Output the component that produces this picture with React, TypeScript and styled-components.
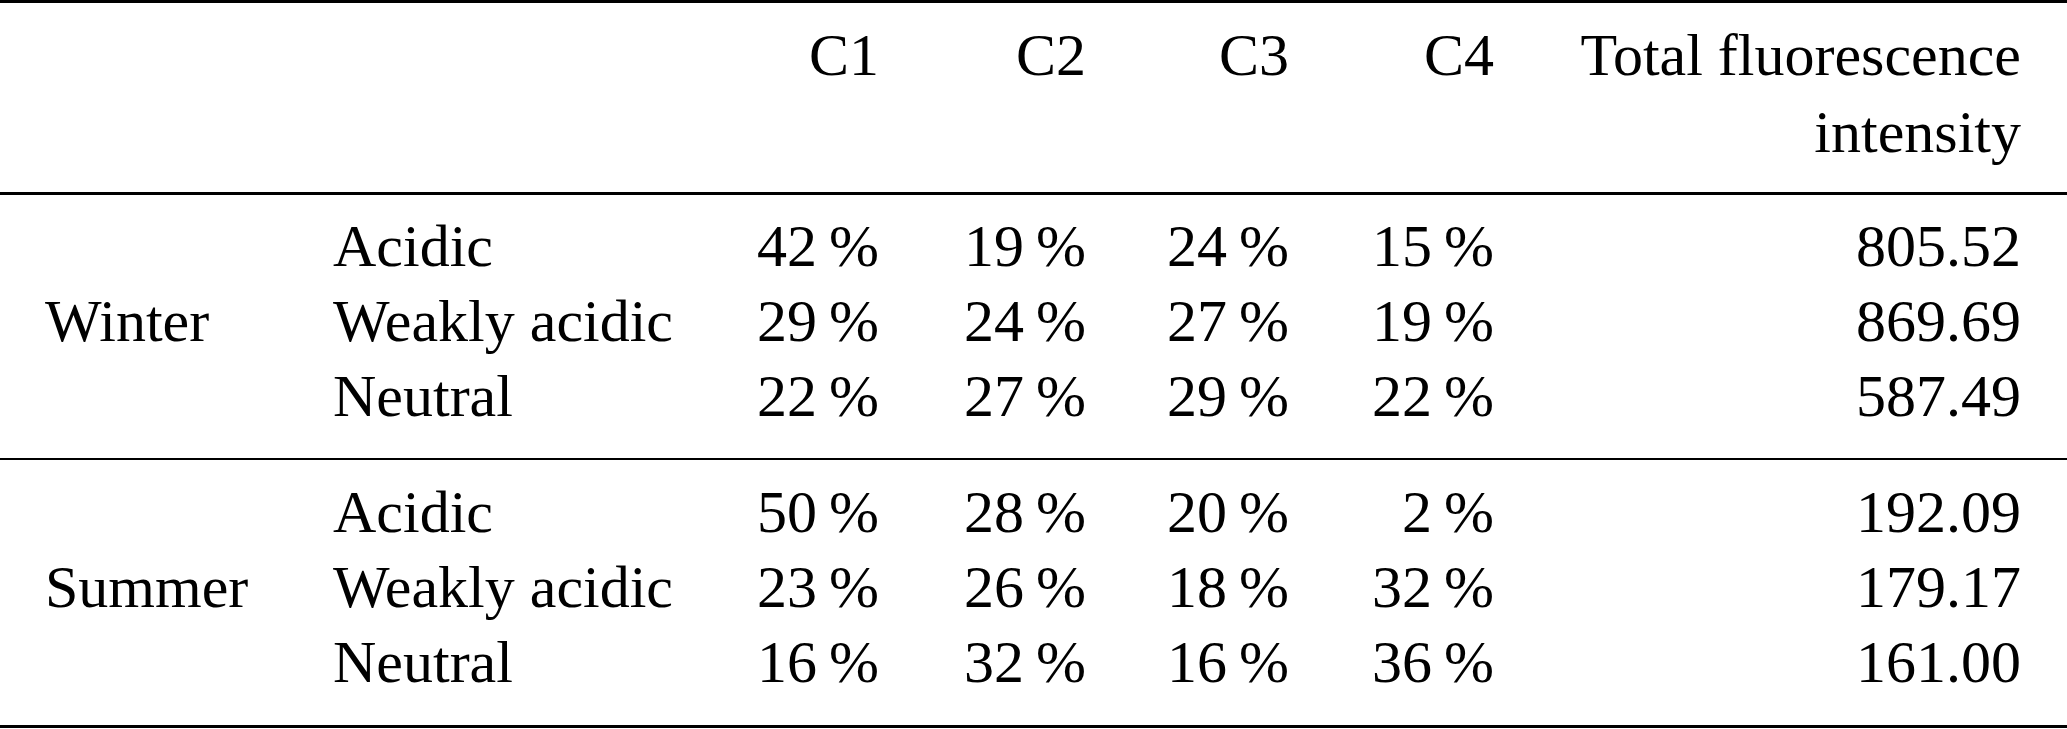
import React from "react";
import styled, { createGlobalStyle } from "styled-components";

type Row = {
  kind: string;
  values: string[];
  total: string;
};

type Group = {
  season: string;
  rows: Row[];
};

const groups: Group[] = [
  {
    season: "Winter",
    rows: [
      { kind: "Acidic", values: ["42", "19", "24", "15"], total: "805.52" },
      { kind: "Weakly acidic", values: ["29", "24", "27", "19"], total: "869.69" },
      { kind: "Neutral", values: ["22", "27", "29", "22"], total: "587.49" },
    ],
  },
  {
    season: "Summer",
    rows: [
      { kind: "Acidic", values: ["50", "28", "20", "2"], total: "192.09" },
      { kind: "Weakly acidic", values: ["23", "26", "18", "32"], total: "179.17" },
      { kind: "Neutral", values: ["16", "32", "16", "36"], total: "161.00" },
    ],
  },
];

const GlobalStyle = createGlobalStyle`
  html, body {
    margin: 0;
    padding: 0;
    background: #ffffff;
  }
  body {
    font-family: "Liberation Serif", "Times New Roman", serif;
    color: #000000;
  }
`;

const Table = styled.div`
  width: 2067px;
  font-size: 60px;
`;

// season | kind | C1 | C2 | C3 | C4 | total
const Section = styled.div<{ $top?: number; $bottom: number; $rule: number }>`
  display: grid;
  grid-template-columns: 333px 367px 179px 207px 203px 205px 527px;
  padding: ${(p) => p.$top ?? 14}px 46px ${(p) => p.$bottom}px 0;
  border-bottom: ${(p) => p.$rule}px solid #000;
  line-height: 75px;
`;

const HeaderSection = styled(Section)`
  border-top: 3px solid #000;
  line-height: 77px;
`;

const Blank = styled.div`
  grid-column: 1 / span 2;
`;

const Label = styled.div`
  grid-column: 1;
  grid-row: 1 / span 3;
  align-self: center;
  padding-left: 45px;
  white-space: nowrap;
`;

const Kind = styled.div`
  grid-column: 2;
  white-space: nowrap;
`;

const Num = styled.div`
  text-align: right;
  white-space: nowrap;
`;

const App = () => {
  return (
    <>
      <GlobalStyle />
      <Table>
        <HeaderSection $bottom={21} $rule={3}>
          <Blank />
          <Num>C1</Num>
          <Num>C2</Num>
          <Num>C3</Num>
          <Num>C4</Num>
          <Num>
            Total fluorescence
            <br />
            intensity
          </Num>
        </HeaderSection>
        {groups.map((g, gi) => (
          <Section
            key={g.season}
            $top={gi === 0 ? 14 : 15}
            $bottom={gi === 0 ? 24 : 25}
            $rule={gi === 0 ? 2 : 3}
          >
            <Label>{g.season}</Label>
            {g.rows.map((r) => (
              <React.Fragment key={r.kind}>
                <Kind>{r.kind}</Kind>
                {r.values.map((v, i) => (
                  <Num key={i}>{v}{"\u2009"}%</Num>
                ))}
                <Num>{r.total}</Num>
              </React.Fragment>
            ))}
          </Section>
        ))}
      </Table>
    </>
  );
};

export default App;
